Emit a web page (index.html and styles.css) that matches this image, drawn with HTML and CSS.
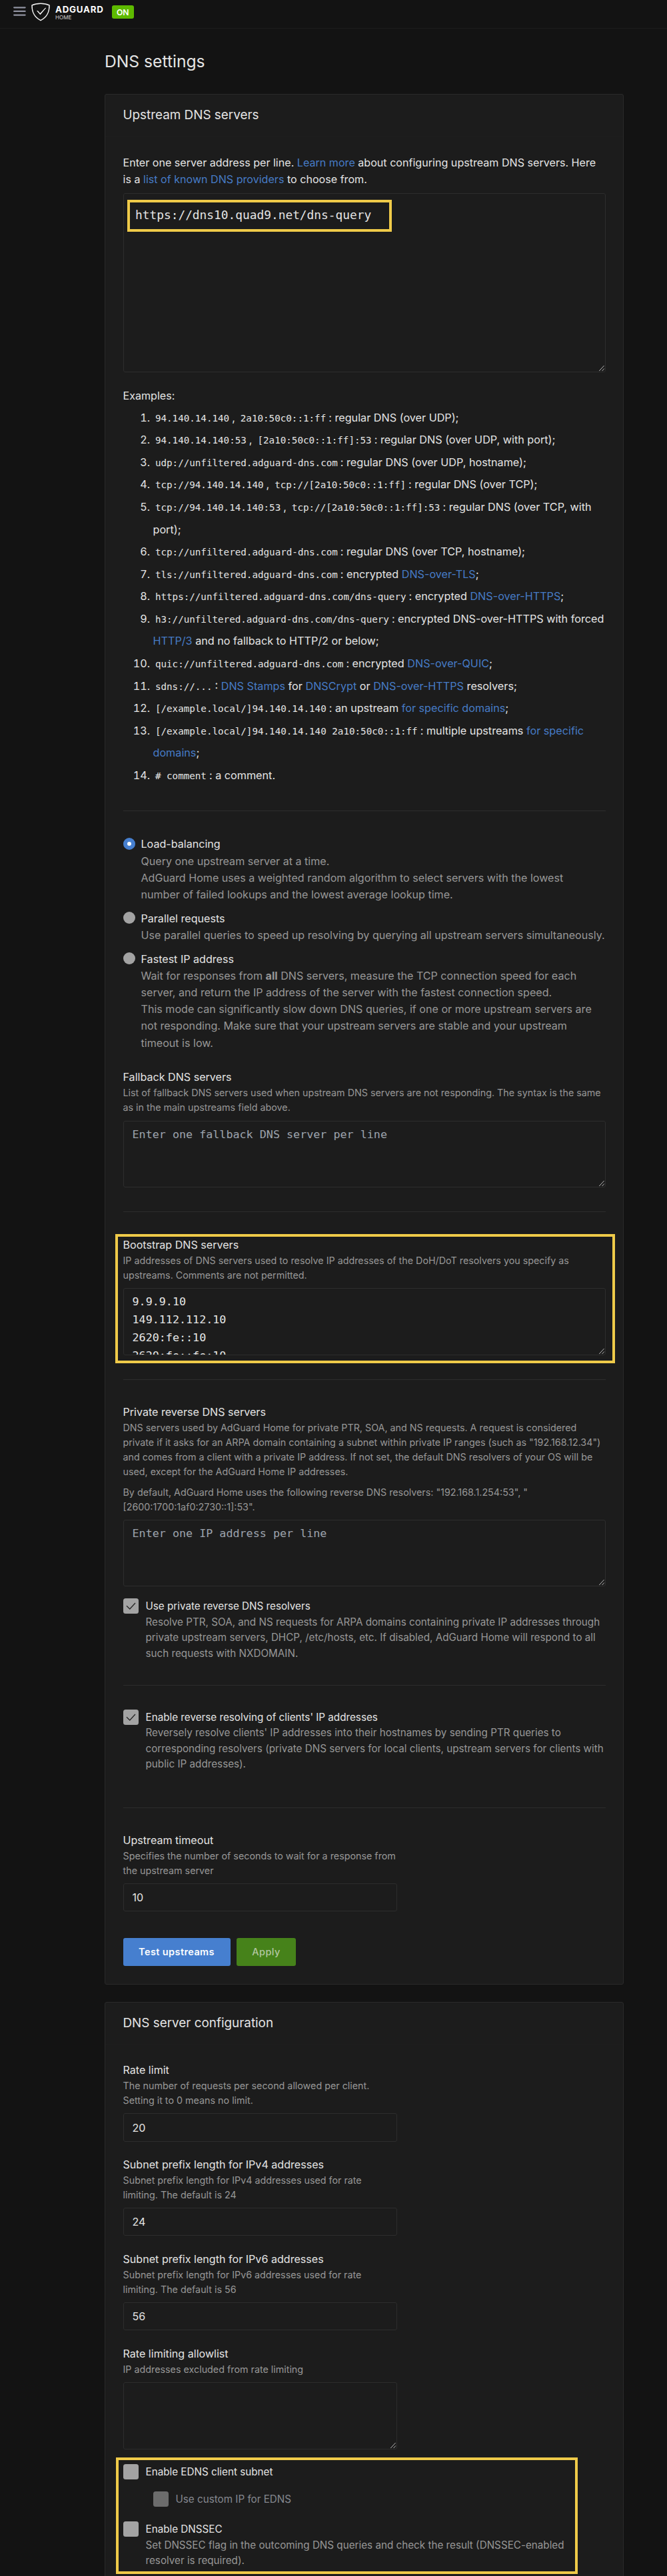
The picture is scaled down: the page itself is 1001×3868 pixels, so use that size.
FILE: index.html
```
<!DOCTYPE html>
<html lang="en">
<head>
<meta charset="utf-8">
<title>DNS settings</title>
<link rel="stylesheet" href="styles.css">
</head>
<body>
<svg width="0" height="0" class="defs">
  <symbol id="grip" viewBox="0 0 10 10"><path d="M1.2 9 8.6 1M5.6 9 8.8 5.5" fill="none" stroke="#b4b4b4" stroke-width="1"/></symbol>
  <symbol id="check" viewBox="0 0 23 23"><path d="M5 11.3 9.8 16 18 7" fill="none" stroke="#262626" stroke-width="1.3"/></symbol>
</svg>
<header class="header">
  <svg class="burger" width="19" height="16" viewBox="0 0 19 16"><path d="M1.2 2.3h16.4M1.2 7.9h16.4M1.2 13.6h16.4" stroke="#9092a0" stroke-width="2.3" stroke-linecap="round"/></svg>
  <svg class="shield" width="28" height="28" viewBox="0 0 28 28"><path d="M14 1.2C9.800 1.200 4.800 2 1 3.900 1 8.500.6 19.800 14 26.600 27.400 19.800 27 8.500 27 3.900 23.200 2 18.200 1.200 14 1.200Z" fill="none" stroke="#f4f4f4" stroke-width="1.5"/><path d="M8.200 12.200c.7-.5 1.500-.3 2 .3l3 3.600 7.600-8c.6-.5 1-.4 1.300-.2l-8.700 10.400Z" fill="#fff"/></svg>
  <div class="brand"><span class="brand-name">ADGUARD</span><span class="brand-sub">HOME</span></div>
  <span class="badge">ON</span>
</header>
<main class="page">
  <h1 class="page-title">DNS settings</h1>

  <section class="card">
    <h2 class="card-title">Upstream DNS servers</h2>
    <div class="card-body upstream">
      <p class="text">Enter one server address per line. <a>Learn more</a> about configuring upstream DNS servers. Here<br>is a <a>list of known DNS providers</a> to choose from.</p>
      <div class="area area-large"><textarea class="input mono">https://dns10.quad9.net/dns-query</textarea><svg class="grip"><use href="#grip"/></svg><div class="mark mark-url"></div></div>
      <p class="text examples">Examples:</p>
      <ol class="list">
        <li><code>94.140.14.140</code>, <code>2a10:50c0::1:ff</code>: regular DNS (over UDP);</li>
        <li><code>94.140.14.140:53</code>, <code>[2a10:50c0::1:ff]:53</code>: regular DNS (over UDP, with port);</li>
        <li><code>udp://unfiltered.adguard-dns.com</code>: regular DNS (over UDP, hostname);</li>
        <li><code>tcp://94.140.14.140</code>, <code>tcp://[2a10:50c0::1:ff]</code>: regular DNS (over TCP);</li>
        <li><code>tcp://94.140.14.140:53</code>, <code>tcp://[2a10:50c0::1:ff]:53</code>: regular DNS (over TCP, with<br>port);</li>
        <li><code>tcp://unfiltered.adguard-dns.com</code>: regular DNS (over TCP, hostname);</li>
        <li><code>tls://unfiltered.adguard-dns.com</code>: encrypted <a>DNS-over-TLS</a>;</li>
        <li><code>https://unfiltered.adguard-dns.com/dns-query</code>: encrypted <a>DNS-over-HTTPS</a>;</li>
        <li><code>h3://unfiltered.adguard-dns.com/dns-query</code>: encrypted DNS-over-HTTPS with forced<br><a>HTTP/3</a> and no fallback to HTTP/2 or below;</li>
        <li><code>quic://unfiltered.adguard-dns.com</code>: encrypted <a>DNS-over-QUIC</a>;</li>
        <li><code>sdns://...</code>: <a>DNS Stamps</a> for <a>DNSCrypt</a> or <a>DNS-over-HTTPS</a> resolvers;</li>
        <li><code>[/example.local/]94.140.14.140</code>: an upstream <a>for specific domains</a>;</li>
        <li><code>[/example.local/]94.140.14.140 2a10:50c0::1:ff</code>: multiple upstreams <a>for specific<br>domains</a>;</li>
        <li><code># comment</code>: a comment.</li>
      </ol>
      <hr>
      <div class="radios">
        <div class="radio"><i class="dot on"></i><div class="text"><b>Load-balancing</b><p>Query one upstream server at a time.<br>AdGuard Home uses a weighted random algorithm to select servers with the lowest<br>number of failed lookups and the lowest average lookup time.</p></div></div>
        <div class="radio"><i class="dot"></i><div class="text"><b>Parallel requests</b><p>Use parallel queries to speed up resolving by querying all upstream servers simultaneously.</p></div></div>
        <div class="radio"><i class="dot"></i><div class="text"><b>Fastest IP address</b><p>Wait for responses from <strong>all</strong> DNS servers, measure the TCP connection speed for each<br>server, and return the IP address of the server with the fastest connection speed.<br>This mode can significantly slow down DNS queries, if one or more upstream servers are<br>not responding. Make sure that your upstream servers are stable and your upstream<br>timeout is low.</p></div></div>
      </div>
      <div class="field fallback">
        <label class="text">Fallback DNS servers</label>
        <p class="desc">List of fallback DNS servers used when upstream DNS servers are not responding. The syntax is the same<br>as in the main upstreams field above.</p>
        <div class="area"><textarea class="input mono" placeholder="Enter one fallback DNS server per line"></textarea><svg class="grip"><use href="#grip"/></svg></div>
      </div>
      <hr>
      <div class="field bootstrap">
        <label class="text">Bootstrap DNS servers</label>
        <p class="desc">IP addresses of DNS servers used to resolve IP addresses of the DoH/DoT resolvers you specify as<br>upstreams. Comments are not permitted.</p>
        <div class="area"><textarea class="input mono">9.9.9.10
149.112.112.10
2620:fe::10
2620:fe::fe:10</textarea><svg class="grip"><use href="#grip"/></svg></div>
        <div class="mark mark-bootstrap"></div>
      </div>
      <hr>
      <div class="field private">
        <label class="text">Private reverse DNS servers</label>
        <p class="desc">DNS servers used by AdGuard Home for private PTR, SOA, and NS requests. A request is considered<br>private if it asks for an ARPA domain containing a subnet within private IP ranges (such as "192.168.12.34")<br>and comes from a client with a private IP address. If not set, the default DNS resolvers of your OS will be<br>used, except for the AdGuard Home IP addresses.</p>
        <p class="desc second">By default, AdGuard Home uses the following reverse DNS resolvers: "192.168.1.254:53", "<br>[2600:1700:1af0:2730::1]:53".</p>
        <div class="area"><textarea class="input mono" placeholder="Enter one IP address per line"></textarea><svg class="grip"><use href="#grip"/></svg></div>
      </div>
      <div class="checkbox use-private"><svg class="box"><use href="#check"/></svg><div><b>Use private reverse DNS resolvers</b><p>Resolve PTR, SOA, and NS requests for ARPA domains containing private IP addresses through<br>private upstream servers, DHCP, /etc/hosts, etc. If disabled, AdGuard Home will respond to all<br>such requests with NXDOMAIN.</p></div></div>
      <hr>
      <div class="checkbox reverse"><svg class="box"><use href="#check"/></svg><div><b>Enable reverse resolving of clients' IP addresses</b><p>Reversely resolve clients' IP addresses into their hostnames by sending PTR queries to<br>corresponding resolvers (private DNS servers for local clients, upstream servers for clients with<br>public IP addresses).</p></div></div>
      <hr>
      <div class="field half timeout">
        <label class="text">Upstream timeout</label>
        <p class="desc">Specifies the number of seconds to wait for a response from<br>the upstream server</p>
        <input class="input line" value="10">
      </div>
      <div class="actions"><button class="btn blue">Test upstreams</button><button class="btn green">Apply</button></div>
    </div>
  </section>

  <section class="card">
    <h2 class="card-title">DNS server configuration</h2>
    <div class="card-body config">
      <div class="field half">
        <label class="text">Rate limit</label>
        <p class="desc">The number of requests per second allowed per client.<br>Setting it to 0 means no limit.</p>
        <input class="input line" value="20">
      </div>
      <div class="field half">
        <label class="text">Subnet prefix length for IPv4 addresses</label>
        <p class="desc">Subnet prefix length for IPv4 addresses used for rate<br>limiting. The default is 24</p>
        <input class="input line" value="24">
      </div>
      <div class="field half">
        <label class="text">Subnet prefix length for IPv6 addresses</label>
        <p class="desc">Subnet prefix length for IPv6 addresses used for rate<br>limiting. The default is 56</p>
        <input class="input line" value="56">
      </div>
      <div class="field half">
        <label class="text">Rate limiting allowlist</label>
        <p class="desc">IP addresses excluded from rate limiting</p>
        <div class="area"><textarea class="input mono"></textarea><svg class="grip"><use href="#grip"/></svg></div>
      </div>
      <div class="toggles">
        <div class="checkbox"><i class="box"></i><b>Enable EDNS client subnet</b></div>
        <div class="checkbox nested"><i class="box"></i><b>Use custom IP for EDNS</b></div>
        <div class="checkbox"><i class="box"></i><div><b>Enable DNSSEC</b><p>Set DNSSEC flag in the outcoming DNS queries and check the result (DNSSEC-enabled<br>resolver is required).</p></div></div>
        <div class="mark mark-toggles"></div>
      </div>
    </div>
  </section>
</main>
</body>
</html>
```
FILE: styles.css
```
* { box-sizing: border-box; }
body {
  margin: 0;
  height: 3868px;
  overflow: hidden;
  background: #131313;
  color: #e4e4e4;
  font: 400 16.1px/25.2px Inter, sans-serif;
  white-space: nowrap;
}
h1, h2, p, ol { margin: 0; padding: 0; font-weight: 400; }
a { color: #467bc6; }
hr { margin: 0; border: 0; height: 1px; background: #2d2d2d; }
.defs { position: absolute; }

.header {
  display: flex;
  align-items: flex-start;
  height: 43px;
  border-bottom: 1px solid #1d1d1d;
  padding-left: 20px;
}
.burger { margin-top: 9px; }
.shield { margin: 4px 0 0 8px; }
.brand { display: flex; flex-direction: column; margin: 7px 0 0 8px; width: 85px; color: #fff; }
.brand-name { font-size: 13.3px; line-height: 15px; font-weight: 700; letter-spacing: .75px; }
.brand-sub { font-size: 8.100px; line-height: 9px; color: #cfcfcf; }
.badge {
  margin-top: 8px;
  width: 32.500px;
  height: 20px;
  border-radius: 3px;
  background: #5eba00;
  color: #fff;
  font-size: 12.200px;
  font-weight: 600;
  line-height: 21px;
  text-align: center;
}

.page { width: 779px; margin-left: 157px; padding-top: 34px; }
.page-title { font-size: 24.65px; line-height: 30px; margin-bottom: 34px; }
.card { border: 1px solid #2a2a2a; border-radius: 3px; background: #1c1c1c; margin-bottom: 26px; }
.card-title { height: 63px; padding: 19px 26.500px 0; border-bottom: 1px solid #1e1e1e; font-size: 18.87px; line-height: 24px; }
.card-body { padding: 26.500px 26.500px 26.300px; }

.text { display: block; font-size: 16.1px; line-height: 25.2px; }
.desc { font-size: 14.3px; line-height: 22px; color: #979797; }
b { display: block; font-weight: 400; }
.field { position: relative; }
.half { width: 411.500px; }

.input {
  display: block;
  width: 100%;
  margin: 0;
  border: 1px solid #2d2d2d;
  border-radius: 3px;
  outline: 0;
  background: #1c1c1c;
  color: #e4e4e4;
  padding: 6.500px 13px;
  font: 400 16.1px/26.8px Inter, sans-serif;
  resize: none;
  overflow: hidden;
}
.input.mono { height: 100%; font: 400 16.73px/26.8px "DejaVu Sans Mono", monospace; }
.input::placeholder { color: #9da3ad; opacity: 1; }
.input.line { height: 42.200px; margin-top: 8.200px; }
.area { position: relative; height: 100.700px; margin-top: 8.200px; }
.grip { position: absolute; right: 1px; bottom: 1px; width: 10px; height: 10px; }
.area-large { height: 268.700px; }
.area-large .input.mono { padding: 18.700px 17.500px; font-size: 17.83px; }

.mark { position: absolute; border: 4px solid #efca49; pointer-events: none; }
.mark-url { left: 6.500px; top: 10px; width: 397px; height: 48px; }
.mark-bootstrap { left: -12px; top: -4px; width: 750px; height: 194px; }
.mark-toggles { left: -10.500px; top: -10px; width: 693px; height: 175px; }

.examples { margin-top: 23.100px; }
.list { margin: 3.700px 0 35.600px; padding-left: 45px; font-size: 16.2px; line-height: 33.57px; }
code { font: 14.22px/1 "DejaVu Sans Mono", monospace; padding: 0 4px 0 3.400px; }

.radios { display: flex; flex-direction: column; gap: 10.500px; margin: 37.500px 0 26.300px; }
.radio { display: flex; gap: 9px; }
.radio p { color: #979797; }
.dot { flex: none; width: 18px; height: 18px; margin-top: 2.500px; border-radius: 50%; background: #a3a3a3; }
.dot.on { border: 6px solid #467fcf; background-color: #fff; }

.fallback { margin-bottom: 36px; }
.bootstrap { margin: 36.300px 0 35.900px; }
.private { margin: 36.500px 0 18px; }
.second { margin-top: 8.300px; }

.checkbox { display: flex; gap: 11px; font-size: 15.22px; line-height: 23.5px; }
.checkbox p { color: #979797; }
.box { flex: none; width: 23px; height: 23px; border-radius: 3.500px; background: #a3a3a3; }
.use-private { margin-bottom: 35.200px; }
.reverse { margin: 36px 0 53px; }
.timeout { margin: 36px 0 39.700px; }

.actions { display: flex; gap: 9.500px; }
.btn { height: 42.400px; border: 0; border-radius: 3px; padding: 0; color: #fff; font: 600 14.5px/42px Inter, sans-serif; letter-spacing: .4px; }
.blue { width: 161px; background: #467fcf; }
.green { width: 89px; background: #46821a; color: #b3c7a2; font-weight: 500; }

.config { display: flex; flex-direction: column; gap: 22.300px; }
.toggles { position: relative; display: flex; flex-direction: column; gap: 17.500px; }
.nested { margin-left: 45px; color: #858890; }
.nested .box { background: #6c6c6c; }
.nested + .checkbox { margin-top: 4px; }
```
